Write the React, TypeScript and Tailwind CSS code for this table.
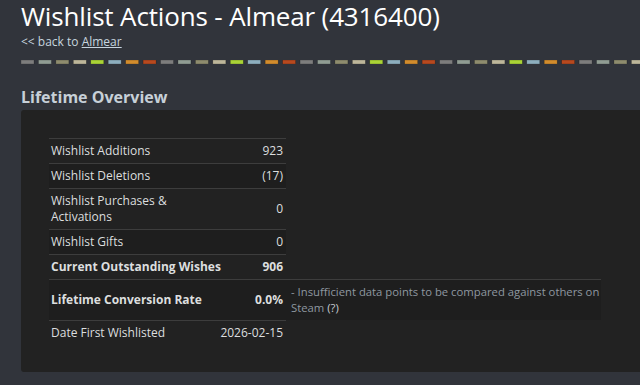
import React from 'react';

const dashColors = ['#7d7d7d', '#909c93', '#8e8c6e', '#bdb69a', '#aad336', '#8daebe', '#d28c2d', '#b7491f'];

type Row = {
  label: React.ReactNode;
  value: string;
  bold?: boolean;
  note?: React.ReactNode;
};

const rows: Row[] = [
  { label: 'Wishlist Additions', value: '923' },
  { label: 'Wishlist Deletions', value: '(17)' },
  { label: <>Wishlist Purchases &amp;<br />Activations</>, value: '0' },
  { label: 'Wishlist Gifts', value: '0' },
  { label: 'Current Outstanding Wishes', value: '906', bold: true },
  {
    label: 'Lifetime Conversion Rate',
    value: '0.0%',
    bold: true,
    note: (
      <>
        - Insufficient data points to be compared against others on
        <br />
        Steam <span className="text-[#c6ccd1]">(?)</span>
      </>
    ),
  },
  { label: 'Date First Wishlisted', value: '2026-02-15' },
];

function DashLine() {
  const count = 36;
  return (
    <svg width="619" height="4" className="block">
      {Array.from({ length: count }).map((_, i) => (
        <rect
          key={i}
          x={i * 17.44}
          y={0}
          width={13}
          height={4}
          fill={dashColors[i % dashColors.length]}
          stroke="rgba(0,0,0,0.35)"
          strokeWidth={0.6}
        />
      ))}
    </svg>
  );
}

export default function App() {
  return (
    <div
      className="w-[640px] h-[385px] overflow-hidden bg-[#31343b] text-[#dcdedf]"
      style={{ fontFamily: '"Open Sans", "Noto Sans", sans-serif' }}
    >
      <div className="pl-[21px]">
        {/* Page header */}
        <h1 className="pt-[1px] text-[26px] leading-[30px] text-white tracking-[-0.15px]">
          Wishlist Actions - Almear (4316400)
        </h1>
        <div className="mt-[3px] text-[12px] leading-[16px] text-[#c6d4df]">
          &lt;&lt; back to <span className="underline text-[#c6d4df]">Almear</span>
        </div>
        <div className="mt-[10px]">
          <DashLine />
        </div>

        <h2 className="mt-[23px] text-[16px] leading-[20px] font-bold text-[#c7d0d8]">Lifetime Overview</h2>

        {/* Overview panel */}
        <div className="mt-[3px] w-[660px] h-[262px] bg-[#222222] rounded-[3px] p-[28px]">
          <table className="table-fixed w-[552px] border-collapse text-[12px] leading-[16px]">
            <tbody>
              {rows.map((row, i) => {
                const striped = i % 2 === 1;
                return (
                  <tr key={i}>
                    <td
                      className={`w-[165px] border-t border-[#3d3d3d] pl-[2px] py-[4px] align-middle whitespace-nowrap ${
                        striped ? 'bg-[#1e1e1e]' : ''
                      } ${row.bold ? 'font-bold' : ''}`}
                    >
                      {row.label}
                    </td>
                    <td
                      className={`w-[72px] border-t border-[#3d3d3d] pr-[3px] py-[4px] text-right align-middle whitespace-nowrap ${
                        striped ? 'bg-[#1e1e1e]' : ''
                      } ${row.bold ? 'font-bold' : ''}`}
                    >
                      {row.value}
                    </td>
                    {row.note ? (
                      <td className="w-[315px] border-t border-[#3d3d3d] bg-[#1e1e1e] pl-[5px] py-[4px] text-[11.3px] text-[#8f98a0] align-middle whitespace-nowrap">
                        {row.note}
                      </td>
                    ) : (
                      <td className="w-[315px] p-0" />
                    )}
                  </tr>
                );
              })}
            </tbody>
          </table>
        </div>
      </div>
    </div>
  );
}
